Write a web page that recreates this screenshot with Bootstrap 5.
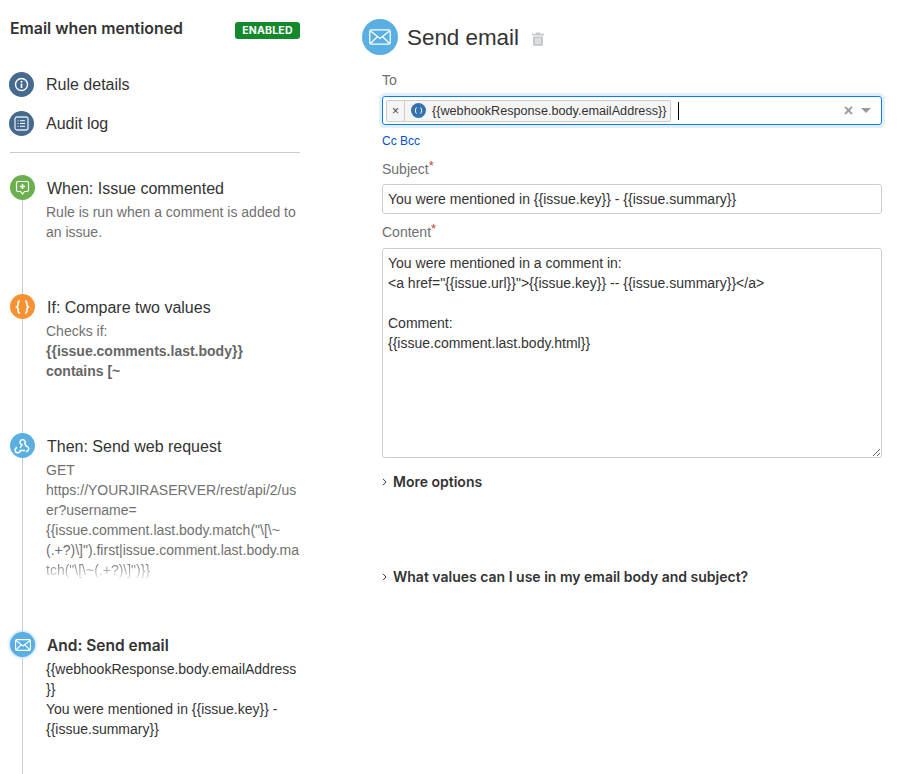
<!DOCTYPE html>
<html lang="en">
<head>
<meta charset="utf-8">
<title>Email when mentioned</title>
<link href="https://cdn.jsdelivr.net/npm/bootstrap@5.3.0/dist/css/bootstrap.min.css" rel="stylesheet">
<style>
html,body{height:774px;overflow:hidden}
body{font-family:"Liberation Sans",Arial,sans-serif;font-size:14px;line-height:20px;color:#333;background:#fff}
.shell{padding:0 21px 0 10px;gap:62px;height:774px}
.side{width:290px;flex:none;position:relative}
.rule-head{height:65px;padding-top:19px}
.rule-title{font-family:Inter,"Liberation Sans",sans-serif;font-weight:600;font-size:15.85px;line-height:20px;color:#333;margin:0}
.pill-on{background:#14892c;color:#fff;font-family:Inter,sans-serif;font-weight:700;font-size:10.5px;line-height:17px;height:17px;width:65px;border-radius:3px;text-align:center;letter-spacing:.2px;margin-top:3px}
.nav-row{height:39px;gap:12px;margin-left:-1px;font-size:16px;color:#333}
.dot{width:25px;height:25px;border-radius:50%;flex:none;display:flex;align-items:center;justify-content:center}
.dot-navy{background:#466a8f}.dot-green{background:#6ab04c}.dot-orange{background:#f79232}.dot-sky{background:#59afe1}
.dot-halo{box-shadow:0 0 3px 1px #bcdcf3}
.sep{border-top:1px solid #ccc;margin:9px 0 22px}
.flow{position:relative;height:599px}
.flow::before{content:"";position:absolute;left:12px;top:0;bottom:0;width:1px;background:#ccc}
.step{position:relative;gap:12px;margin-bottom:52px}
.step:last-child{margin-bottom:0}
.step-title{font-size:16px;line-height:27px;color:#333}
.step-title-on{font-family:Inter,sans-serif;font-weight:600;font-size:15.5px}
.step-text{color:#707070;margin-left:-1px;word-break:break-all;width:256px}
.step-text-dark{color:#333}
.step-text b{color:#666}
.fade-end{background:linear-gradient(#707070,#e4e4e4);-webkit-background-clip:text;background-clip:text;color:transparent}
.main{width:520px;flex:none;padding-top:19px}
.send-head{height:36px;gap:9px}
.big-dot{width:36px;height:36px;border-radius:50%;background:#59afe1;flex:none;display:flex;align-items:center;justify-content:center}
.send-title{font-family:"Liberation Sans",sans-serif;font-size:22.4px;font-weight:400;line-height:36px;margin:1px 0 0;color:#333}
.trash-ic{margin:4px 0 0 3px}
.fields{margin-left:20px;width:500px}
.lab{color:#707070;line-height:20px;margin:0;display:block}
.lab sup{color:#d04437;font-size:13px;top:-.3em}
.lab-to{margin-top:15px}
.lab-subj{margin-top:10px}
.lab-cont{margin-top:8px}
.pick{height:29px;margin-top:6px;border:1px solid #0c7cf0;border-radius:3px;box-shadow:0 0 0 3px #e2f0fe;padding:0 10px 0 3px}
.chip{height:22px;border:1px solid #ccc;border-radius:2px;background:#f5f5f5;font-size:12.65px;line-height:20px;color:#333}
.chip-x{width:18px;text-align:center;border-right:1px solid #ccc;font-size:12px;line-height:20px;color:#444}
.chip-body{padding:0 4px 0 6px;gap:6px}
.mini{width:15px;height:15px;border-radius:50%;background:#3572b0;display:flex;align-items:center;justify-content:center}
.caret-bar{width:1px;height:18px;background:#000;margin-left:7px}
.clear-x{color:#999;font-size:16px;line-height:20px;font-weight:700;margin-right:8px}
.tri{width:0;height:0;border-left:5px solid transparent;border-right:5px solid transparent;border-top:5px solid #999}
.cc{font-size:12px;line-height:16px;margin-top:8px;height:16px}
.cc a{color:#0052cc;text-decoration:none}
.fld.form-control{border:1px solid #ccc;border-radius:3px;padding:5px;font-size:14px;line-height:20px;color:#333;box-shadow:none;font-family:inherit}
.fld-one{height:30px;margin-top:5px}
.fld-area.form-control{height:210px;margin-top:6px;padding-top:4px}
.fold{font-family:Inter,sans-serif;font-weight:600;font-size:14px;line-height:20px;color:#333;gap:6px}
.fold-a{margin-top:14px}
.fold-b{margin-top:75px}
</style>
</head>
<body>
<div class="shell d-flex">
  <aside class="side">
    <div class="rule-head d-flex justify-content-between align-items-start">
      <h1 class="rule-title">Email when mentioned</h1>
      <div class="pill-on">ENABLED</div>
    </div>
    <div class="nav-row d-flex align-items-center">
      <span class="dot dot-navy"><svg width="15" height="15" viewBox="0 0 15 15" fill="none"><circle cx="7.500" cy="7.500" r="6" stroke="#fff" stroke-width="1.400"/><circle cx="7.500" cy="4.800" r="1" fill="#fff"/><rect x="6.700" y="6.600" width="1.600" height="4.400" fill="#fff"/></svg></span>
      <span>Rule details</span>
    </div>
    <div class="nav-row d-flex align-items-center">
      <span class="dot dot-navy"><svg width="15" height="15" viewBox="0 0 15 15" fill="none"><rect x="1" y="1" width="13" height="13" rx="2" stroke="#dfe6ee" stroke-width="1.300"/><path d="M6 4.800h5M6 7.500h5M6 10.200h5M3.600 4.800h1M3.600 7.500h1M3.600 10.200h1" stroke="#fff" stroke-width="1.100"/></svg></span>
      <span>Audit log</span>
    </div>
    <div class="sep"></div>
    <div class="flow">
      <div class="step d-flex">
        <span class="dot dot-green"><svg width="15" height="16" viewBox="0 0 15 16" fill="none"><path d="M3 1.500h9a1.500 1.500 0 0 1 1.500 1.500v7a1.500 1.500 0 0 1-1.500 1.500h-2.500l-2 2.500-2-2.500h-2.500a1.500 1.500 0 0 1-1.500-1.500v-7a1.500 1.500 0 0 1 1.500-1.500z" stroke="#fff" stroke-width="1.200"/><path d="M7.500 4v5M5 6.500h5" stroke="#fff" stroke-width="1.500"/></svg></span>
        <div>
          <div class="step-title">When: Issue commented</div>
          <div class="step-text">Rule is run when a comment is added to<br>an issue.</div>
        </div>
      </div>
      <div class="step d-flex">
        <span class="dot dot-orange"><svg width="15" height="14" viewBox="0 0 15 14" fill="none" stroke="#fff" stroke-width="1.700"><path d="M5 1c-1.800 0-1.800 1-1.800 2.300S3.200 6.300 1.800 7c1.400.7 1.400 2.400 1.400 3.700S3.200 13 5 13M10 1c1.800 0 1.800 1 1.800 2.300s0 3 1.400 3.700c-1.400.7-1.400 2.400-1.400 3.700s0 2.300-1.800 2.300"/></svg></span>
        <div>
          <div class="step-title">If: Compare two values</div>
          <div class="step-text">Checks if:<br><b>{{issue.comments.last.body}}<br>contains [~</b></div>
        </div>
      </div>
      <div class="step d-flex">
        <span class="dot dot-sky"><svg width="17" height="16" viewBox="0 0 17 16" fill="none" stroke="#fff" stroke-width="1.500"><path d="M6.200 9.800L8 6.800A2.600 2.600 0 1 1 11 5.400M3.200 9.600A2.600 2.600 0 1 0 6.300 12.600H11M10.300 4.800l2 3.400A2.600 2.600 0 1 1 11.800 13.400"/></svg></span>
        <div>
          <div class="step-title">Then: Send web request</div>
          <div class="step-text">GET<br>https://YOURJIRASERVER/rest/api/2/us<br>er?username=<br>{{issue.comment.last.body.match("\[\~<br>(.+?)\]").first|issue.comment.last.body.ma<br><span class="fade-end">tch("\[\~(.+?)\]")}}</span></div>
        </div>
      </div>
      <div class="step d-flex">
        <span class="dot dot-sky dot-halo"><svg width="16" height="12" viewBox="0 0 16 12" fill="none" stroke="#fff" stroke-width="1.100"><rect x=".6" y=".6" width="14.800" height="10.800" rx="1.300"/><path d="M1 1.500l7 5.500 7-5.500M1 11l5-5.200M15 11l-5-5.200"/></svg></span>
        <div>
          <div class="step-title step-title-on">And: Send email</div>
          <div class="step-text step-text-dark">{{webhookResponse.body.emailAddress<br>}}<br>You were mentioned in {{issue.key}} -<br>{{issue.summary}}</div>
        </div>
      </div>
    </div>
  </aside>
  <main class="main">
    <div class="send-head d-flex align-items-center">
      <span class="big-dot"><svg width="22" height="16" viewBox="0 0 22 16" fill="none" stroke="#fff" stroke-width="1.300"><rect x=".8" y=".8" width="20.400" height="14.400" rx="1.500"/><path d="M1.500 2l9.500 7.500L20.500 2M1.500 14.500l7-7M20.500 14.500l-7-7"/></svg></span>
      <h2 class="send-title">Send email</h2>
      <svg class="trash-ic" width="14" height="14" viewBox="0 0 14 14" fill="#c4c8cc"><rect x="5" y="0.500" width="4" height="1.500"/><rect x="1" y="1.800" width="12" height="1.700" rx=".5"/><path d="M2 4.500h10v8.200a1 1 0 0 1-1 1H3a1 1 0 0 1-1-1z"/><path d="M5 6v6M7 6v6M9 6v6" stroke="#fff" stroke-width=".8"/></svg>
    </div>
    <div class="fields">
      <label class="lab lab-to">To</label>
      <div class="pick d-flex align-items-center">
        <div class="chip d-flex">
          <span class="chip-x">×</span>
          <span class="chip-body d-flex align-items-center"><span class="mini"><svg width="9" height="7" viewBox="0 0 9 7" fill="none" stroke="#fff" stroke-width="1"><path d="M2.500 .5C1 2 1 5 2.500 6.500M6.500 .5C8 2 8 5 6.500 6.500"/></svg></span><span>{{webhookResponse.body.emailAddress}}</span></span>
        </div>
        <span class="caret-bar"></span>
        <span class="clear-x ms-auto">×</span>
        <span class="tri"></span>
      </div>
      <div class="cc"><a href="#">Cc</a> <a href="#">Bcc</a></div>
      <label class="lab lab-subj">Subject<sup>*</sup></label>
      <input class="form-control fld fld-one" type="text" value="You were mentioned in {{issue.key}} - {{issue.summary}}">
      <label class="lab lab-cont">Content<sup>*</sup></label>
      <textarea class="form-control fld fld-area">You were mentioned in a comment in:
&lt;a href="{{issue.url}}"&gt;{{issue.key}} -- {{issue.summary}}&lt;/a&gt;

Comment:
{{issue.comment.last.body.html}}</textarea>
      <div class="fold fold-a d-flex align-items-center"><svg width="5" height="8" viewBox="0 0 5 8" fill="none" stroke="#333" stroke-width="1"><path d="M1 .8l3 3.200-3 3.200"/></svg><span>More options</span></div>
      <div class="fold fold-b d-flex align-items-center"><svg width="5" height="8" viewBox="0 0 5 8" fill="none" stroke="#333" stroke-width="1"><path d="M1 .8l3 3.200-3 3.200"/></svg><span>What values can I use in my email body and subject?</span></div>
    </div>
  </main>
</div>
<script src="https://cdn.jsdelivr.net/npm/bootstrap@5.3.0/dist/js/bootstrap.bundle.min.js"></script>
</body>
</html>
